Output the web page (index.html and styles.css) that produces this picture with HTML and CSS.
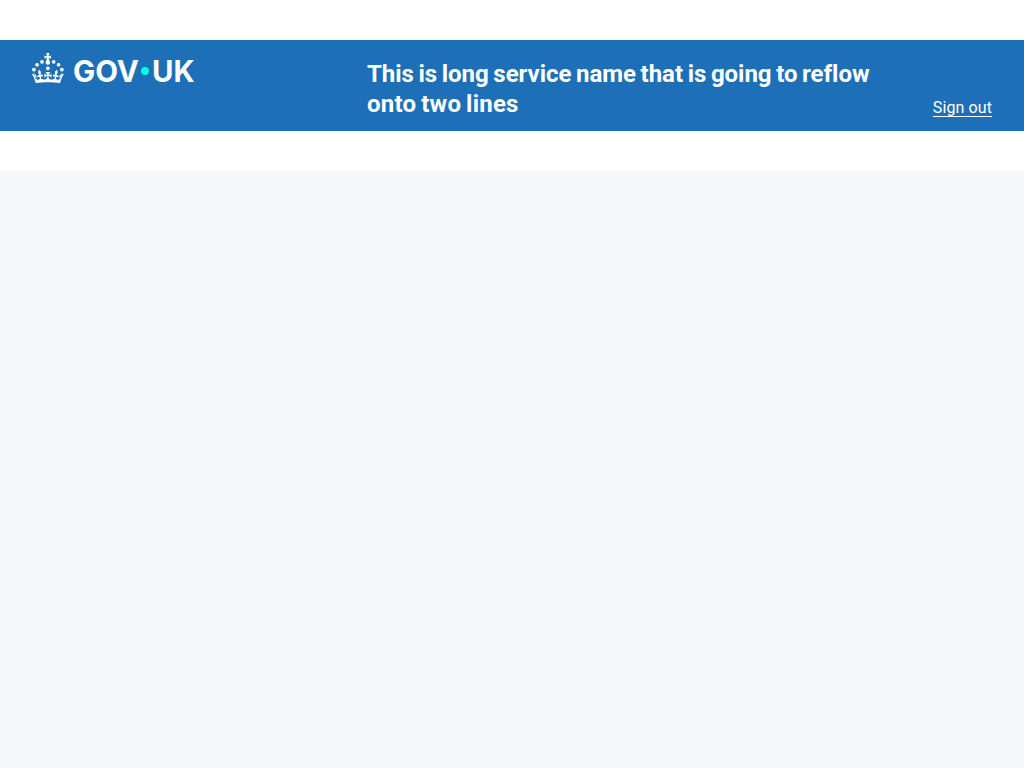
FILE: index.html
```html
<!DOCTYPE html>
<html lang="en">
<head>
<meta charset="utf-8">
<title>Service header</title>
<link rel="stylesheet" href="styles.css">
</head>
<body>
<main class="panel">
  <header class="header">
    <div class="header__logo">
      <svg class="logo" viewBox="0 0 324 60" width="162" height="30" role="img" aria-label="GOV.UK">
        <g fill="#fff">
          <circle cx="20" cy="17.6" r="3.7"/><circle cx="10.2" cy="23.5" r="3.7"/><circle cx="3.7" cy="33.2" r="3.7"/><circle cx="31.7" cy="30.6" r="3.7"/><circle cx="43.3" cy="17.6" r="3.7"/><circle cx="53.2" cy="23.5" r="3.7"/><circle cx="59.7" cy="33.2" r="3.7"/>
          <path d="M33.1,9.8c.2-.1.3-.3.5-.5l4.6,2.4v-6.8l-4.6,1.5c-.1-.2-.3-.3-.5-.5l1.9-5.9h-6.7l1.9,5.9c-.2.1-.3.3-.5.5l-4.6-1.5v6.8l4.6-2.4c.1.2.3.3.5.5l-2.6,8c-.9,2.8,1.2,5.7,4.1,5.7h0c3,0,5.1-2.9,4.1-5.7l-2.6-8ZM37,37.9s-3.4,3.8-4.1,6.1c2.2,0,4.2-.5,6.4-2.8l-.7,8.5c-2-2.8-4.4-4.1-5.7-3.8.1,3.1.5,6.7,5.8,7.2,3.7.3,6.7-1.5,7-3.8.4-2.6-2-4.3-3.7-1.6-1.4-4.5,2.4-6.1,4.9-3.2-1.9-4.5-1.8-7.7,2.4-10.9,3,4,2.6,7.3-1.2,11.1,2.4-1.3,6.2,0,4,4.6-1.2-2.8-3.7-2.2-4.2.2-.3,1.7.7,3.7,3,4.2,1.9.3,4.7-.9,7-5.9-1.3,0-2.4.7-3.9,1.7l2.4-8c.6,2.3,1.4,3.7,2.2,4.5.6-1.6.5-2.8,0-5.3l5,1.8c-2.6,3.6-5.2,8.7-7.3,17.5-7.4-1.1-15.7-1.7-24.5-1.7h0c-8.8,0-17.1.6-24.5,1.7-2.1-8.9-4.7-13.9-7.3-17.5l5-1.8c-.5,2.5-.6,3.7,0,5.3.8-.8,1.6-2.3,2.2-4.5l2.4,8c-1.5-1-2.6-1.7-3.9-1.7,2.3,5,5.2,6.2,7,5.9,2.3-.4,3.3-2.4,3-4.2-.5-2.4-3-3.1-4.2-.2-2.2-4.6,1.6-6,4-4.6-3.7-3.7-4.2-7.1-1.2-11.1,4.2,3.2,4.3,6.4,2.4,10.9,2.5-2.8,6.3-1.3,4.9,3.2-1.8-2.7-4.1-1-3.7,1.6.3,2.3,3.3,4.1,7,3.8,5.4-.5,5.7-4.2,5.8-7.2-1.3-.2-3.7,1-5.7,3.8l-.7-8.5c2.2,2.3,4.2,2.7,6.4,2.8-.7-2.3-4.1-6.1-4.1-6.1h10.6,0Z"/>
          <text class="logo__text" x="82" y="57.5" textLength="132" lengthAdjust="spacingAndGlyphs">GOV</text>
          <text class="logo__text" x="240" y="57.5" textLength="85" lengthAdjust="spacingAndGlyphs">UK</text>
        </g>
        <circle class="logo__dot" cx="226" cy="36" r="8"/>
      </svg>
    </div>
    <div class="header__content">
      <div class="header__name">This is long service name that is going to reflow<br><span class="header__name-end">onto two lines</span></div>
      <a class="header__link" href="#">Sign out</a>
    </div>
  </header>
</main>
</body>
</html>
```
FILE: styles.css
```css
body {
  margin: 0;
  background: #f4f8fb;
  color: #fff;
  font-family: Roboto, sans-serif;
}
.panel {
  padding: 40px 0;
  background: #fff;
}
.header {
  display: flex;
  box-sizing: border-box;
  height: 91px;
  padding: 13px 32px 0;
  background: #1d70b8;
}
.header__logo {
  flex: 0 0 335px;
}
.logo {
  display: block;
  overflow: visible;
}
.logo__text {
  font: 700 61px Inter, sans-serif;
}
.logo__dot {
  fill: #00ffe0;
}
.header__content {
  display: flex;
  flex: 1;
  align-items: flex-end;
  justify-content: space-between;
  height: 66px;
}
.header__name {
  font-size: 24px;
  font-weight: 700;
  line-height: 30px;
  letter-spacing: -0.03px;
  word-spacing: -1.3px;
  white-space: nowrap;
}
.header__name-end {
  letter-spacing: 0.23px;
}
.header__link {
  margin-bottom: -1px;
  color: #fff;
  font-size: 16px;
  line-height: 24px;
  letter-spacing: 0.1px;
  text-decoration: underline;
  text-decoration-thickness: 1px;
  text-underline-offset: 3px;
}
```
